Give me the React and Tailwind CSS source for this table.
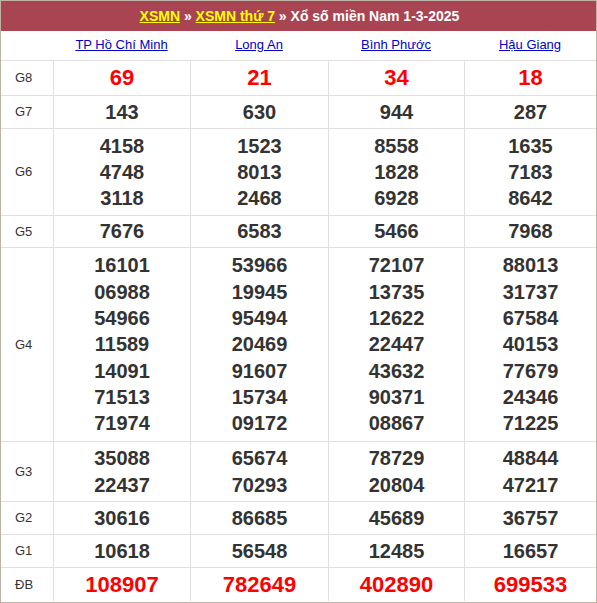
import React from "react";

const provinces = ["TP Hồ Chí Minh", "Long An", "Bình Phước", "Hậu Giang"];

const rows = [
  { label: "G8", red: true, big: true, vals: [["69"], ["21"], ["34"], ["18"]], h: "h-[35px]" },
  { label: "G7", vals: [["143"], ["630"], ["944"], ["287"]], h: "h-[33px]" },
  {
    label: "G6",
    vals: [
      ["4158", "4748", "3118"],
      ["1523", "8013", "2468"],
      ["8558", "1828", "6928"],
      ["1635", "7183", "8642"],
    ],
    h: "h-[87px]",
  },
  { label: "G5", vals: [["7676"], ["6583"], ["5466"], ["7968"]], h: "h-[32px]" },
  {
    label: "G4",
    vals: [
      ["16101", "06988", "54966", "11589", "14091", "71513", "71974"],
      ["53966", "19945", "95494", "20469", "91607", "15734", "09172"],
      ["72107", "13735", "12622", "22447", "43632", "90371", "08867"],
      ["88013", "31737", "67584", "40153", "77679", "24346", "71225"],
    ],
    h: "h-[194px]",
  },
  {
    label: "G3",
    vals: [
      ["35088", "22437"],
      ["65674", "70293"],
      ["78729", "20804"],
      ["48844", "47217"],
    ],
    h: "h-[60px]",
  },
  { label: "G2", vals: [["30616"], ["86685"], ["45689"], ["36757"]], h: "h-[33px]" },
  { label: "G1", vals: [["10618"], ["56548"], ["12485"], ["16657"]], h: "h-[33px]" },
  { label: "ĐB", red: true, big: true, last: true, vals: [["108907"], ["782649"], ["402890"], ["699533"]], h: "h-[33px]" },
];

export default function App() {
  return (
    <div
      className="w-[597px] h-[603px] bg-white border border-[#bfb3a7] flex flex-col"
      style={{ fontFamily: '"Liberation Sans", Arial, sans-serif' }}
    >
      <div className="h-[30px] bg-[#a94453] flex items-center justify-center text-[14px] font-bold text-white pl-[2px]">
        <span className="text-[#ffff00] underline">XSMN</span>
        <span className="whitespace-pre"> » </span>
        <span className="text-[#ffff00] underline">XSMN thứ 7</span>
        <span className="whitespace-pre"> » Xổ số miền Nam 1-3-2025</span>
      </div>
      <div className="grid grid-cols-[52px_137px_138px_136px_1fr] h-[30px] border-b border-[#e0e0e0]">
        <div />
        {provinces.map((p) => (
          <div key={p} className="flex items-center justify-center text-[13px] text-[#0000cc] underline pb-[2px]">
            {p}
          </div>
        ))}
      </div>
      {rows.map((r) => (
        <div
          key={r.label}
          className={`grid grid-cols-[52px_137px_138px_136px_1fr] ${r.h} ${r.last ? "" : "border-b border-[#e0e0e0]"}`}
        >
          <div className="flex items-center pl-[14px] text-[13px] text-[#333]">{r.label}</div>
          {r.vals.map((v, i) => (
            <div
              key={i}
              className={`border-l border-[#e0e0e0] flex flex-col items-center justify-center font-bold ${
                r.red ? "text-[#ff0000] text-[22px] leading-[26px]" : "text-[#333] text-[20px] leading-[26.3px]"
              }`}
            >
              {v.map((n, j) => (
                <div key={j}>{n}</div>
              ))}
            </div>
          ))}
        </div>
      ))}
    </div>
  );
}
